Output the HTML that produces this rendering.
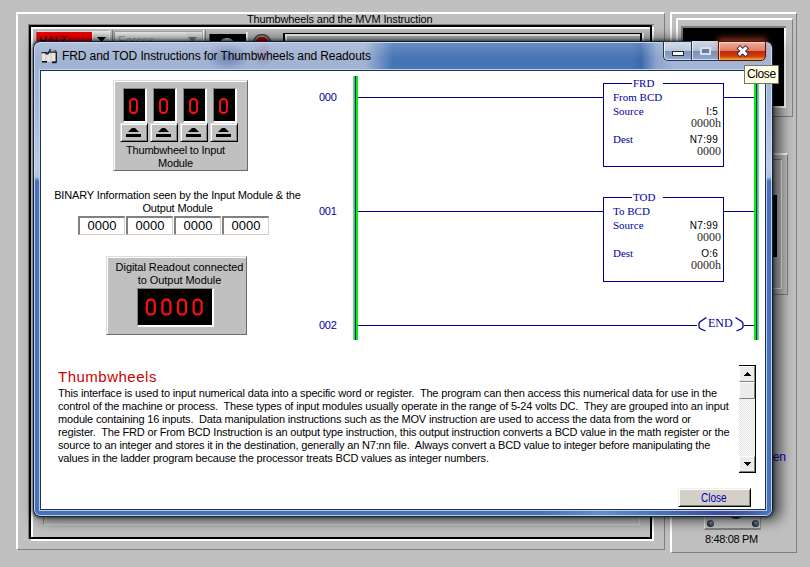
<!DOCTYPE html>
<html><head><meta charset="utf-8">
<style>
*{margin:0;padding:0;box-sizing:border-box}
html,body{width:810px;height:567px;overflow:hidden;background:#c0c0c0;font-family:"Liberation Sans",sans-serif;position:relative}
.a{position:absolute}
.t{position:absolute;white-space:nowrap;line-height:1}
.raised{background:#c0c0c0;border-top:1px solid #dcdcdc;border-left:1px solid #dcdcdc;border-right:1px solid #6a6a6a;border-bottom:1px solid #6a6a6a;box-shadow:inset 1px 1px 0 #fff}
.dig{position:absolute;background:#000;border-top:1px solid #808080;border-left:1px solid #808080;border-right:2px solid #fff;border-bottom:2px solid #fff}
.btn{position:absolute;background:#c0c0c0;border-top:1px solid #dcdcdc;border-left:1px solid #dcdcdc;border-right:1px solid #000;border-bottom:1px solid #000;box-shadow:inset 1px 1px 0 #fff,inset -1px -1px 0 #808080}
.tb{position:absolute;background:#fff;border-top:2px solid #808080;border-left:2px solid #808080;border-right:1px solid #d4d0c8;border-bottom:1px solid #d4d0c8;font-size:13px;color:#000;text-align:center;line-height:16px}
.blu{color:#0000a0}
.serif{font-family:"Liberation Serif",serif}
.body{font-size:11px;color:#000;letter-spacing:-0.17px;white-space:pre}
</style></head><body>

<!-- left app panel -->
<div class="a" style="left:16px;top:12px;width:649px;height:538px;border-top:2px solid #fff;border-left:2px solid #fff;border-right:1px solid #808080;border-bottom:1px solid #808080"></div>
<div class="t" style="left:247px;top:14px;font-size:11px;color:#000;letter-spacing:-0.15px">Thumbwheels and the MVM Instruction</div>
<div class="a" style="left:28px;top:24px;width:626px;height:515px;border-top:1px solid #808080;border-left:1px solid #808080"></div>
<div class="a" style="left:31px;top:27px;width:623px;height:514px;border:2px solid #fff"></div>
<div class="a" style="left:29px;top:25px;width:623px;height:514px;border:2px solid #000"></div>
<div class="a" style="left:33px;top:29px;width:617px;height:508px;background:#c0c0c0"></div>
<div class="a" style="left:43px;top:40px;width:597px;height:485px;border-left:1px solid #8a8a8a;border-right:1px solid #dadada;border-bottom:1px solid #dadada"></div>
<!-- toolbar -->
<div class="a" style="left:36px;top:31px;width:57px;height:12px;background:#ff0000;border-left:1px solid #707070;border-top:1px solid #e0e0e0"></div>
<div class="t" style="left:39px;top:34px;font-size:13px;color:#300000;letter-spacing:0.3px;transform:scaleX(0.85);transform-origin:0 0">HALT</div>
<div class="a" style="left:92px;top:31px;width:17px;height:12px;background:linear-gradient(#f4f4f4,#c8c8c8);border-left:1px solid #fff"></div>
<div class="a" style="left:109px;top:30px;width:4px;height:12px;border-left:1px solid #fff;border-right:1px solid #808080;background:#c8c8c8"></div>
<div class="a" style="left:114px;top:31px;width:88px;height:12px;background:linear-gradient(#f6f6f6,#d8d8d8);border-left:1px solid #a0a0a0;border-top:1px solid #b0b0b0"></div>
<div class="a" style="left:186px;top:32px;width:16px;height:11px;background:linear-gradient(#f0f0f0,#c8c8c8);border-left:1px solid #e8e8e8"></div>
<div class="t" style="left:118px;top:35px;font-size:12px;color:#a8a8a8">Forces</div>
<svg class="a" style="left:0;top:0" width="810" height="60"><path d="M97 37 L106 37 L101.5 42 Z" fill="#000"/><path d="M188 37 L197 37 L192.5 42 Z" fill="#808080"/></svg>
<div class="a" style="left:203px;top:30px;width:3px;height:12px;border-left:1px solid #fff;border-right:1px solid #888"></div>
<div class="a" style="left:209px;top:34px;width:37px;height:9px;background:#000;border-left:1px solid #606060"></div>
<div class="a" style="left:246px;top:32px;width:2px;height:10px;background:#fff"></div>
<div class="a" style="left:220px;top:38px;width:14px;height:6px;border-radius:7px 7px 0 0;background:#b8b8b8"></div>
<div class="a" style="left:253px;top:34px;width:18px;height:16px;border-radius:9px;background:radial-gradient(circle at 50% 60%,#e00000 0,#c00000 55%,#a0a0a0 60%,#505050 75%);border:1px solid #404040"></div>
<div class="a" style="left:283px;top:33px;width:359px;height:10px;border-top:1px solid #000;border-left:2px solid #000;border-right:2px solid #000"></div>
<div class="a" style="left:285px;top:34px;width:355px;height:8px;border-top:2px solid #fff;border-left:2px solid #fff"></div>
<div class="a" style="left:642px;top:33px;width:2px;height:10px;background:#fff"></div>

<!-- right app panel -->
<div class="a" style="left:670px;top:12px;width:127px;height:541px;border-top:2px solid #fff;border-left:2px solid #fff;border-right:1px solid #808080;border-bottom:1px solid #808080"></div>
<div class="a" style="left:676px;top:18px;width:117px;height:99px;border-top:2px solid #fff;border-left:2px solid #fff;border-right:1px solid #808080;border-bottom:1px solid #808080"></div>
<div class="a" style="left:681px;top:26px;width:105px;height:82px;border-top:2px solid #808080;border-left:2px solid #808080"></div>
<div class="a" style="left:683px;top:28px;width:103px;height:80px;background:#000;border-right:2px solid #fff;border-bottom:2px solid #fff"></div>
<div class="a" style="left:740px;top:153px;width:48px;height:142px;border-top:2px solid #fff;border-left:2px solid #fff;border-right:1px solid #808080;border-bottom:1px solid #808080"></div>
<div class="a" style="left:745px;top:159px;width:37px;height:130px;border-top:1px solid #808080;border-left:1px solid #808080;border-right:1px solid #fff;border-bottom:1px solid #fff"></div>
<div class="a" style="left:750px;top:195px;width:27px;height:62px;background:#000"></div>
<div class="t" style="left:748px;top:451px;font-size:12px;color:#0000c0">Screen</div>
<div class="a" style="left:704px;top:510px;width:57px;height:20px;background:#c4c4c4;border-left:1px solid #f0f0f0;border-bottom:2px solid #808080;border-right:1px solid #909090"></div>
<div class="a" style="left:728px;top:510px;width:16px;height:9px;border-radius:0 0 8px 8px;background:#303030"></div>
<div class="a" style="left:707px;top:520px;width:7px;height:7px;border-radius:4px;background:radial-gradient(circle at 60% 40%,#8090a8,#1a2030 70%)"></div>
<div class="a" style="left:752px;top:520px;width:7px;height:7px;border-radius:4px;background:radial-gradient(circle at 60% 40%,#8090a8,#1a2030 70%)"></div>
<div class="t" style="left:705px;top:534px;font-size:11px;color:#000;letter-spacing:-0.35px">8:48:08 PM</div>

<!-- dialog frame -->
<div class="a" style="left:33px;top:41px;width:740px;height:476px;border-radius:7px 7px 7px 7px;background:linear-gradient(#a0b2d0 0,#a4b7d6 60px,#bccbe2 125px,#b0c2dc 135px,#4a72b4 139px,#4a72b4 100%);border:1px solid rgba(10,20,35,.9);box-shadow:inset 0 0 0 1px rgba(200,225,255,.85),0 0 3px 1px rgba(0,0,0,.5),5px 1px 13px 3px rgba(0,0,0,.6)"></div>
<div class="a" style="left:35px;top:43px;width:736px;height:26px;border-radius:4px 4px 0 0;background:radial-gradient(ellipse 22px 14px at 193px 14px,rgba(40,70,130,.45),rgba(40,70,130,0)),radial-gradient(ellipse 12px 12px at 228px 12px,rgba(120,60,110,.3),rgba(120,60,110,0)),linear-gradient(90deg,rgba(190,206,230,0) 0,rgba(178,196,224,0) 330px,#4674b4 358px,#4674b4 596px,#3f6aab 606px,#8ea6cc 622px,#a4b7d6 640px,#a4b7d6 100%)"></div>
<div class="a" style="left:35px;top:43px;width:736px;height:26px;border-radius:4px 4px 0 0;background:linear-gradient(rgba(255,255,255,.18),rgba(255,255,255,0) 60%)"></div>
<div class="a" style="left:41px;top:511px;width:726px;height:4px;background:linear-gradient(90deg,rgba(110,150,210,0) 0,rgba(110,150,210,0) 500px,rgba(120,160,220,.6) 560px,rgba(110,150,210,0) 620px,rgba(60,40,120,.55) 680px,rgba(60,40,120,.2) 715px,rgba(60,40,120,0) 726px)"></div>
<div class="t" style="left:62px;top:50px;font-size:12px;color:#000;letter-spacing:-0.1px">FRD and TOD Instructions for Thumbwheels and Readouts</div>
<div class="a" style="left:40px;top:70px;width:726px;height:440px;background:#fff;border:1px solid #22324a;box-shadow:0 0 0 1px rgba(190,215,250,.9)"></div>
<!-- window icon -->
<svg class="a" style="left:38px;top:45px" width="22" height="20">
  <rect x="4" y="8" width="14" height="8.5" fill="#e6e6de"/>
  <path d="M8 8 V16 M13 8 V16" stroke="#c8c8c0" stroke-width="1"/>
  <path d="M3.5 7.6 H9.5 M7.5 8.8 H10 L11 7.2 H18.5" stroke="#182030" stroke-width="1.3" fill="none"/>
  <path d="M11 7.5 L12.5 4" stroke="#1a2a50" stroke-width="1.6"/>
  <rect x="17.6" y="6.8" width="1.3" height="10.4" fill="#101010"/>
  <rect x="4" y="16" width="5" height="1.6" fill="#101010"/>
  <rect x="14" y="16.4" width="4.5" height="1.8" fill="#101010"/>
  <rect x="14.5" y="5.5" width="1.6" height="1.6" fill="#4a8a40"/>
  <rect x="16.6" y="5" width="1.6" height="1.6" fill="#a02828"/>
</svg>

<!-- caption buttons -->
<div class="a" style="left:663px;top:41px;width:29px;height:20px;border:1px solid #28364e;border-right:none;border-radius:0 0 0 5px;background:linear-gradient(#d4deea,#b8c8de 50%,#7c94bc 52%,#94acd0);box-shadow:inset 1px 0 0 rgba(255,255,255,.8),inset 0 -1px 0 rgba(255,255,255,.6)"></div>
<div class="a" style="left:691px;top:41px;width:1px;height:19px;background:#28364e"></div>
<div class="a" style="left:672px;top:51px;width:12px;height:5px;background:#fff;border:1px solid #202830"></div>
<div class="a" style="left:692px;top:41px;width:26px;height:20px;border-bottom:1px solid #28364e;background:linear-gradient(#d0dae8,#b0c0d8 50%,#7890b8 52%,#90a8cc);box-shadow:inset 1px 0 0 rgba(255,255,255,.7),inset 0 -1px 0 rgba(255,255,255,.6)"></div>
<div class="a" style="left:700px;top:47px;width:11px;height:8px;border:2px solid rgba(230,235,245,.9);background:#6c7c98"></div>
<div class="a" style="left:718px;top:41px;width:48px;height:20px;border:1px solid #4a1a10;border-radius:0 0 5px 0;background:linear-gradient(#f0b0a0,#e27860 50%,#c02808 52%,#d04010 80%,#f0b040);box-shadow:inset 1px 1px 0 rgba(255,220,210,.8),0 -3px 6px rgba(255,90,40,.55)"></div>
<svg class="a" style="left:735px;top:44px" width="16" height="14">
  <path d="M5 4.5 L10.5 9.8 M10.5 4.5 L5 9.8" stroke="#3a3040" stroke-width="5" stroke-linecap="square"/>
  <path d="M5 4.5 L10.5 9.8 M10.5 4.5 L5 9.8" stroke="#fff" stroke-width="3.1" stroke-linecap="square"/>
</svg>

<!-- thumbwheel panel -->
<div class="a raised" style="left:113px;top:80px;width:135px;height:91px"></div>
<div class="dig" style="left:123px;top:88px;width:24px;height:35px"></div>
<div class="dig" style="left:153px;top:88px;width:24px;height:35px"></div>
<div class="dig" style="left:183px;top:88px;width:24px;height:35px"></div>
<div class="dig" style="left:213px;top:88px;width:24px;height:35px"></div>
<svg class="a" style="left:0;top:0" width="810" height="567">
  <g fill="none" stroke="#ff1010" stroke-width="1.9">
    <rect x="130" y="99" width="7" height="14" rx="3.3"/>
    <rect x="160" y="99" width="7" height="14" rx="3.3"/>
    <rect x="190" y="99" width="7" height="14" rx="3.3"/>
    <rect x="220" y="99" width="7" height="14" rx="3.3"/>
  </g>
</svg>
<div class="btn" style="left:120px;top:123px;width:28px;height:19px"></div>
<div class="btn" style="left:150px;top:123px;width:28px;height:19px"></div>
<div class="btn" style="left:180px;top:123px;width:28px;height:19px"></div>
<div class="btn" style="left:210px;top:123px;width:28px;height:19px"></div>
<svg class="a" style="left:0;top:0" width="810" height="567">
  <g fill="#000">
    <path d="M128 132 L132 128 L135 128 L139 132 Z"/><rect x="126" y="134" width="15" height="3"/>
    <path d="M158 132 L162 128 L165 128 L169 132 Z"/><rect x="156" y="134" width="15" height="3"/>
    <path d="M188 132 L192 128 L195 128 L199 132 Z"/><rect x="186" y="134" width="15" height="3"/>
    <path d="M218 132 L222 128 L225 128 L229 132 Z"/><rect x="216" y="134" width="15" height="3"/>
  </g>
</svg>
<div class="t" style="left:108px;width:135px;text-align:center;top:144px;font-size:11px;line-height:13px;white-space:normal;letter-spacing:-0.2px">Thumbwheel to Input<br>Module</div>

<div class="t" style="left:40px;width:275px;text-align:center;top:189px;font-size:11px;line-height:13px;letter-spacing:-0.15px">BINARY Information seen by the Input Module &amp; the<br>Output Module</div>
<div class="tb" style="left:78px;top:216px;width:47px;height:19px">0000</div>
<div class="tb" style="left:126px;top:216px;width:47px;height:19px">0000</div>
<div class="tb" style="left:174px;top:216px;width:47px;height:19px">0000</div>
<div class="tb" style="left:222px;top:216px;width:47px;height:19px">0000</div>

<!-- readout panel -->
<div class="a raised" style="left:106px;top:256px;width:141px;height:79px"></div>
<div class="t" style="left:109px;width:141px;text-align:center;top:261px;font-size:11px;line-height:13px;letter-spacing:-0.05px">Digital Readout connected<br>to Output Module</div>
<div class="dig" style="left:137px;top:288px;width:77px;height:39px"></div>
<svg class="a" style="left:0;top:0" width="810" height="567">
  <g fill="none" stroke="#ff1010" stroke-width="2.2">
    <rect x="146.8" y="299.7" width="8" height="14.8" rx="3.6"/>
    <rect x="162.4" y="299.7" width="8" height="14.8" rx="3.6"/>
    <rect x="178" y="299.7" width="8" height="14.8" rx="3.6"/>
    <rect x="193.6" y="299.7" width="8" height="14.8" rx="3.6"/>
  </g>
</svg>

<!-- ladder -->
<svg class="a" style="left:0;top:0" width="810" height="567" shape-rendering="crispEdges">
  <g fill="#000090">
    <rect x="356" y="97" width="248" height="1"/><rect x="723" y="97" width="31" height="1"/>
    <rect x="356" y="211" width="248" height="1"/><rect x="723" y="211" width="31" height="1"/>
    <rect x="356" y="325" width="341" height="1"/><rect x="744" y="325" width="10" height="1"/>
    <rect x="603" y="83" width="29" height="1"/><rect x="663" y="83" width="61" height="1"/>
    <rect x="603" y="83" width="1" height="84"/><rect x="723" y="83" width="1" height="84"/><rect x="603" y="166" width="121" height="1"/>
    <rect x="603" y="197" width="29" height="1"/><rect x="663" y="197" width="61" height="1"/>
    <rect x="603" y="197" width="1" height="85"/><rect x="723" y="197" width="1" height="85"/><rect x="603" y="281" width="121" height="1"/>
  </g>
  <rect x="353" y="76" width="5" height="264" fill="#00f000"/>
  <rect x="353" y="76" width="1" height="264" fill="#70e070"/>
  <rect x="354" y="76" width="1" height="264" fill="#40b0b0"/>
  <rect x="355" y="76" width="1" height="264" fill="#102a60"/>
  <rect x="754" y="76" width="5" height="264" fill="#00f000"/>
  <rect x="756" y="76" width="1" height="264" fill="#102a60"/>
  <rect x="757" y="76" width="1" height="264" fill="#40b0b0"/>
  <rect x="758" y="76" width="1" height="264" fill="#70e070"/>
</svg>
<svg class="a" style="left:0;top:0" width="810" height="567">
  <g fill="none" stroke="#000090" stroke-width="1.3">
    <path d="M706.5 317.5 L700 321.8 L699 323.5 L699 327 L700 328.5 L705.5 331"/>
    <path d="M735.5 317.5 L742 321.8 L743 323.5 L743 327 L742 328.5 L736.5 331"/>
  </g>
</svg>
<div class="t blu" style="left:319px;top:92px;font-size:11px;letter-spacing:-0.3px">000</div>
<div class="t blu" style="left:319px;top:206px;font-size:11px;letter-spacing:-0.3px">001</div>
<div class="t blu" style="left:319px;top:320px;font-size:11px;letter-spacing:-0.3px">002</div>

<div class="t serif blu" style="left:633px;top:78px;font-size:11px">FRD</div>
<div class="t serif blu" style="left:613px;top:92px;font-size:11px">From BCD</div>
<div class="t serif blu" style="left:613px;top:106px;font-size:11px">Source</div>
<div class="t serif blu" style="left:613px;top:134px;font-size:11px">Dest</div>
<div class="t" style="right:92px;top:107px;font-size:10px;letter-spacing:0.2px">I:5</div>
<div class="t serif" style="right:89px;top:117px;font-size:12px;color:#2a2a2a">0000h</div>
<div class="t" style="right:92px;top:135px;font-size:10px;letter-spacing:0.3px">N7:99</div>
<div class="t serif" style="right:89px;top:145px;font-size:12px;color:#2a2a2a">0000</div>

<div class="t serif blu" style="left:633px;top:192px;font-size:11px">TOD</div>
<div class="t serif blu" style="left:613px;top:206px;font-size:11px">To BCD</div>
<div class="t serif blu" style="left:613px;top:220px;font-size:11px">Source</div>
<div class="t serif blu" style="left:613px;top:248px;font-size:11px">Dest</div>
<div class="t" style="right:92px;top:221px;font-size:10px;letter-spacing:0.3px">N7:99</div>
<div class="t serif" style="right:89px;top:231px;font-size:12px;color:#2a2a2a">0000</div>
<div class="t" style="right:92px;top:249px;font-size:10px;letter-spacing:0.2px">O:6</div>
<div class="t serif" style="right:89px;top:259px;font-size:12px;color:#2a2a2a">0000h</div>

<div class="t serif blu" style="left:708px;top:317px;font-size:12px">END</div>

<!-- text area -->
<div class="t" style="left:58px;top:369px;font-size:15px;letter-spacing:0.5px;color:#d00000">Thumbwheels</div>
<div class="t body" style="left:58px;top:387px;line-height:13px">This interface is used to input numerical data into a specific word or register.  The program can then access this numerical data for use in the<br>control of the machine or process.  These types of input modules usually operate in the range of 5-24 volts DC.  They are grouped into an input<br>module containing 16 inputs.  Data manipulation instructions such as the MOV instruction are used to access the data from the word or<br>register.  The FRD or From BCD Instruction is an output type instruction, this output instruction converts a BCD value in the math register or the<br>source to an integer and stores it in the destination, generally an N7:nn file.  Always convert a BCD value to integer before manipulating the<br>values in the ladder program because the processor treats BCD values as integer numbers.</div>

<!-- scrollbar -->
<div class="a" style="left:739px;top:365px;width:17px;height:108px;border-top:1px solid #000;border-right:1px solid #000;border-bottom:1px solid #000;background-color:#f4f4f4;background-image:repeating-conic-gradient(#e4e4e4 0 25%,#fbfbfb 0 50%);background-size:2px 2px"></div>
<div class="a" style="left:739px;top:366px;width:16px;height:16px;background:#ececec;border-top:1px solid #fff;border-left:1px solid #fff;border-right:1px solid #808080;border-bottom:1px solid #808080"></div>
<div class="a" style="left:739px;top:382px;width:16px;height:17px;background:#ececec;border-top:1px solid #fff;border-left:1px solid #fff;border-right:1px solid #808080;border-bottom:1px solid #808080"></div>
<div class="a" style="left:739px;top:456px;width:16px;height:16px;background:#ececec;border-top:1px solid #fff;border-left:1px solid #fff;border-right:1px solid #808080;border-bottom:1px solid #808080"></div>
<svg class="a" style="left:0;top:0" width="810" height="567" shape-rendering="crispEdges"><path d="M743 376 L747 372 L751 376 Z" fill="#000"/><path d="M743 462 L747 466 L751 462 Z" fill="#000"/></svg>

<!-- close button -->
<div class="a" style="left:678px;top:488px;width:73px;height:19px;background:#d4d0c8;border-top:1px solid #f0f0f0;border-left:1px solid #f0f0f0;border-right:1px solid #000;border-bottom:1px solid #000;box-shadow:inset 1px 1px 0 #fff,inset -1px -1px 0 #808080"></div>
<div class="t" style="left:701px;top:491px;font-size:13px;color:#0000b0;transform:scaleX(0.77);transform-origin:0 0">Close</div>

<!-- tooltip -->
<div class="a" style="left:744px;top:65px;width:35px;height:19px;background:#ffffe1;border:1px solid #767676"></div>
<div class="t" style="left:747px;top:68px;font-size:12px;color:#000;letter-spacing:-0.4px">Close</div>

</body></html>
